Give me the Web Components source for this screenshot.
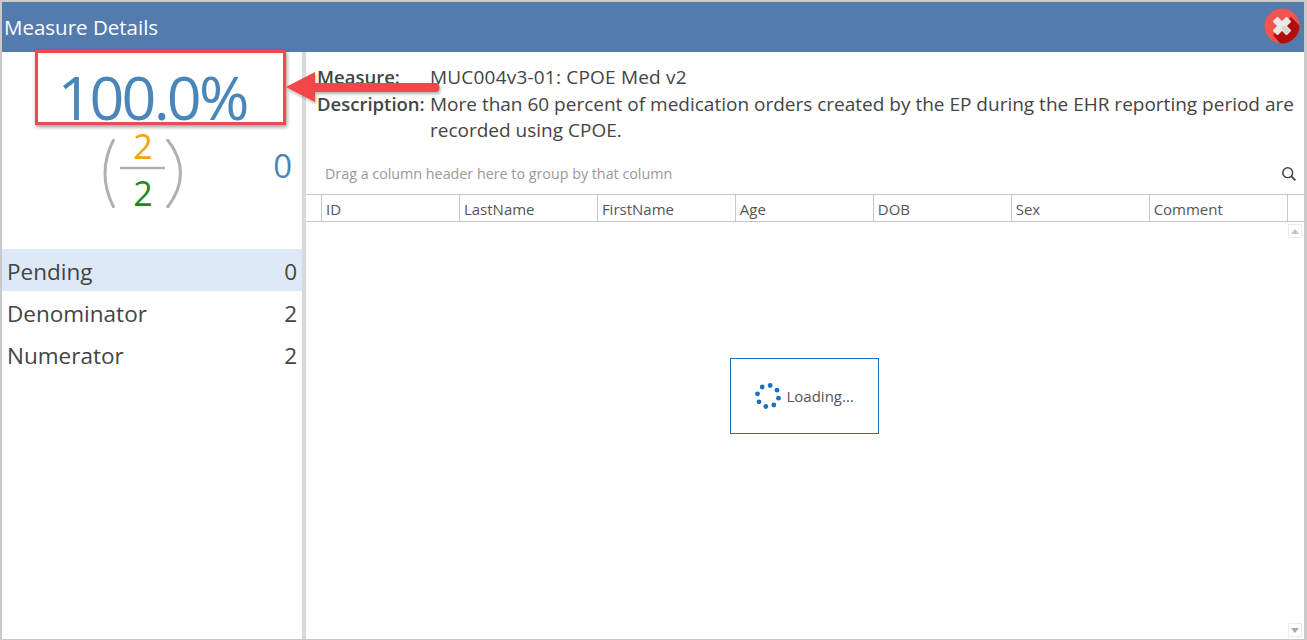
<!DOCTYPE html>
<html>
<head>
<meta charset="utf-8">
<title>Measure Details</title>
<style>
  html, body { margin: 0; height: 100%; overflow: hidden; background: #fff; }
  body { font-family: "Open Sans", "Noto Sans", sans-serif; color: #444; }
</style>
</head>
<body>
<measure-window>
  <title-bar slot="title">Measure Details</title-bar>
  <score-panel slot="left" percent="100.0%" numerator="2" denominator="2" pending="0">
    <count-row active label="Pending" value="0"></count-row>
    <count-row label="Denominator" value="2"></count-row>
    <count-row label="Numerator" value="2"></count-row>
  </score-panel>
  <measure-info slot="right" measure="MUC004v3-01: CPOE Med v2">More than 60 percent of medication orders created by the EP during the EHR reporting period are recorded using CPOE.</measure-info>
  <data-grid slot="right" columns='["ID","LastName","FirstName","Age","DOB","Sex","Comment"]'></data-grid>
</measure-window>
<callout-mark></callout-mark>

<script>
class MeasureWindow extends HTMLElement {
  constructor() {
    super();
    this.attachShadow({ mode: 'open' });
    this.shadowRoot.innerHTML = `
      <style>
        :host {
          display: flex;
          flex-direction: column;
          box-sizing: border-box;
          width: 1307px;
          height: 640px;
          border: solid #c9c9c9;
          border-width: 2px 3px 1px 2px;
        }
        .body { flex: 1; display: flex; min-height: 0; }
        .left { width: 300px; flex: none; }
        .splitter { width: 4px; flex: none; background: #d9d9d9; }
        .right { flex: 1; min-width: 0; display: flex; flex-direction: column; }
      </style>
      <slot name="title"></slot>
      <div class="body">
        <div class="left"><slot name="left"></slot></div>
        <div class="splitter"></div>
        <div class="right"><slot name="right"></slot></div>
      </div>
    `;
  }
}

class TitleBar extends HTMLElement {
  constructor() {
    super();
    this.attachShadow({ mode: 'open' });
    this.shadowRoot.innerHTML = `
      <style>
        :host {
          display: flex;
          align-items: center;
          justify-content: space-between;
          height: 50px;
          flex: none;
          padding: 0 4px 0 2px;
          box-sizing: border-box;
          background: #537bae;
          color: #fff;
          font-size: 20.5px;
          line-height: 54px;
        }
        svg { width: 36px; height: 36px; display: block; margin-top: -2px; }
      </style>
      <span><slot></slot></span>
      <svg viewBox="0 0 36 36">
        <defs><clipPath id="c"><circle cx="18" cy="18" r="17.5"/></clipPath></defs>
        <circle cx="18" cy="18" r="17.5" fill="#f4544f"/>
        <path clip-path="url(#c)" d="M27 9L40 22V40H20L9 27Z" fill="#b10f0b"/>
        <path d="M10 13.5L13.5 10L18 14.5L22.5 10L26 13.5L21.5 18L26 22.5L22.5 26L18 21.5L13.5 26L10 22.5L14.5 18Z" fill="#e9e9e9" stroke="#e9e9e9" stroke-width="2" stroke-linejoin="round"/>
        <path d="M18 18L21.5 18L26 22.5L22.5 26L18 21.5Z" fill="#d6d6d6"/>
      </svg>
    `;
  }
}

class ScorePanel extends HTMLElement {
  constructor() {
    super();
    this.attachShadow({ mode: 'open' });
    const percent = this.getAttribute('percent');
    const numerator = this.getAttribute('numerator');
    const denominator = this.getAttribute('denominator');
    const pending = this.getAttribute('pending');
    this.shadowRoot.innerHTML = `
      <style>
        :host { display: block; }
        .percent {
          height: 87px;
          box-sizing: border-box;
          padding-top: 9px;
          text-align: center;
          color: #4a86b8;
          font-size: 61px;
          line-height: 72px;
          letter-spacing: -2.8px;
        }
        .ratio { height: 110px; position: relative; }
        .fraction { margin-left: 97px; width: 90px; height: 69px; }
        .fraction svg { width: 90px; height: 69px; display: block; }
        .stack {
          position: absolute;
          left: 97px;
          top: 0;
          width: 88px;
          text-align: center;
          font-size: 34px;
          line-height: 26px;
        }
        .num { color: #f5a100; margin-top: -6px; }
        .den { color: #1a8a1f; margin-top: 21px; }
        .pending {
          position: absolute;
          right: 10px;
          top: 5px;
          color: #4a86b8;
          font-size: 33px;
          line-height: 44px;
        }
      </style>
      <div class="percent">${percent}</div>
      <div class="ratio">
        <div class="fraction">
          <svg viewBox="0 0 90 69" fill="none" stroke="#b0b0b0">
            <path d="M15 0Q-3 34 15 69" stroke-width="3"/>
            <path d="M68 0Q95 34 68 69" stroke-width="3"/>
            <path d="M21 29H66" stroke-width="2.5"/>
          </svg>
        </div>
        <div class="stack">
          <div class="num">${numerator}</div>
          <div class="den">${denominator}</div>
        </div>
        <div class="pending">${pending}</div>
      </div>
      <slot></slot>
    `;
  }
}

class CountRow extends HTMLElement {
  constructor() {
    super();
    this.attachShadow({ mode: 'open' });
    this.shadowRoot.innerHTML = `
      <style>
        :host {
          display: flex;
          justify-content: space-between;
          height: 42px;
          padding: 0 5px;
          color: #444;
          font-size: 22.5px;
          line-height: 46px;
        }
        :host([active]) { background: #dde9f6; }
      </style>
      <span>${this.getAttribute('label')}</span>
      <span>${this.getAttribute('value')}</span>
    `;
  }
}

class MeasureInfo extends HTMLElement {
  constructor() {
    super();
    this.attachShadow({ mode: 'open' });
    this.shadowRoot.innerHTML = `
      <style>
        :host {
          display: grid;
          grid-template-columns: 113px 1fr;
          align-content: start;
          flex: none;
          height: 103px;
          box-sizing: border-box;
          padding: 12px 5px 0 11px;
          color: #444;
          font-size: 19px;
          line-height: 26.5px;
        }
        b { font-weight: 600; font-size: 18.5px; }
        .code { letter-spacing: .2px; }
      </style>
      <b>Measure:</b><span class="code">${this.getAttribute('measure')}</span>
      <b>Description:</b><span><slot></slot></span>
    `;
  }
}

class DataGrid extends HTMLElement {
  constructor() {
    super();
    this.attachShadow({ mode: 'open' });
    const columns = JSON.parse(this.getAttribute('columns'));
    this.shadowRoot.innerHTML = `
      <style>
        :host {
          flex: 1;
          min-height: 0;
          display: flex;
          flex-direction: column;
          position: relative;
          font-size: 15px;
        }
        .group {
          height: 39px;
          flex: none;
          box-sizing: border-box;
          padding: 0 7px 2px 19px;
          display: flex;
          align-items: center;
          justify-content: space-between;
          color: #999;
          font-size: 14.3px;
        }
        .group svg { width: 16px; height: 16px; display: block; }
        .head {
          display: flex;
          flex: none;
          height: 28px;
          box-sizing: border-box;
          border-top: 1px solid #c8c8c8;
          border-bottom: 1px solid #c8c8c8;
          color: #555;
        }
        .head div {
          box-sizing: border-box;
          width: 137.95px;
          flex: none;
          border-right: 1px solid #c8c8c8;
          padding-left: 4px;
          line-height: 29px;
        }
        .head div:first-child { width: 16px; padding: 0; }
        .head div:last-child { border-right: 0; flex: 1; width: auto; }
        .body { flex: 1; min-height: 0; display: flex; align-items: center; justify-content: center; padding: 0 2px 70px 0; }
        .arrow {
          position: absolute;
          right: 2px;
          width: 14px;
          height: 14px;
          box-sizing: border-box;
          border: 1px solid #ececec;
          display: flex;
          align-items: center;
          justify-content: center;
        }
        .up { top: 69px; }
        .down { bottom: 2px; }
        .arrow i { width: 0; height: 0; border: 4px solid transparent; }
        .up i { border-bottom: 5px solid #c4c4c4; border-top: 0; }
        .down i { border-top: 5px solid #a8a8a8; border-bottom: 0; }
      </style>
      <div class="group">
        <span>Drag a column header here to group by that column</span>
        <svg viewBox="0 0 15 15" fill="none" stroke="#444" stroke-width="1.4">
          <circle cx="6.3" cy="6.3" r="4.6"/>
          <path d="M9.7 9.7L13.5 13.5" stroke-width="1.8"/>
        </svg>
      </div>
      <div class="head">
        <div></div>
        ${columns.map(col => `<div>${col}</div>`).join('')}
        <div></div>
      </div>
      <div class="body"><loading-panel>Loading...</loading-panel></div>
      <span class="arrow up"><i></i></span>
      <span class="arrow down"><i></i></span>
    `;
  }
}

class LoadingPanel extends HTMLElement {
  constructor() {
    super();
    this.attachShadow({ mode: 'open' });
    const dots = [];
    for (let i = 0; i < 8; i++) {
      const a = (i * 45 + 12) * Math.PI / 180;
      dots.push(`<circle cx="${(13 + 10.7 * Math.cos(a)).toFixed(1)}" cy="${(13 + 10.7 * Math.sin(a)).toFixed(1)}" r="2.4"/>`);
    }
    this.shadowRoot.innerHTML = `
      <style>
        :host {
          display: flex;
          align-items: center;
          gap: 6px;
          width: 149px;
          height: 76px;
          box-sizing: border-box;
          padding-left: 24px;
          border: 1px solid #1a73bd;
          background: #fff;
          color: #555;
          font-size: 15px;
        }
        svg { width: 26px; height: 26px; display: block; fill: #1a6fc0; }
      </style>
      <svg viewBox="0 0 26 26">${dots.join('')}</svg>
      <span><slot></slot></span>
    `;
  }
}

// red highlight drawn over the screenshot, sits on top of everything
class CalloutMark extends HTMLElement {
  constructor() {
    super();
    this.attachShadow({ mode: 'open' });
    this.shadowRoot.innerHTML = `
      <style>
        :host { position: absolute; left: 0; top: 0; width: 1307px; height: 640px; pointer-events: none; display: block; }
        .box {
          position: absolute;
          left: 35px;
          top: 50px;
          width: 251px;
          height: 75px;
          box-sizing: border-box;
          border: 3px solid #f04a50;
          box-shadow: 1px 2px 4px rgba(0, 0, 0, .4);
        }
        svg { position: absolute; left: 280px; top: 66px; width: 170px; height: 44px; }
      </style>
      <div class="box"></div>
      <svg viewBox="0 0 170 44">
        <defs><filter id="s" x="-10%" y="-30%" width="120%" height="170%"><feDropShadow dx="1" dy="2" stdDeviation="1.5" flood-color="#000" flood-opacity=".3"/></filter></defs>
        <path filter="url(#s)" d="M6 21L35 6V17H156Q159.5 17 159.5 21.5Q159.5 26 156 26H35V36Z" fill="#f44449"/>
      </svg>
    `;
  }
}

customElements.define('title-bar', TitleBar);
customElements.define('count-row', CountRow);
customElements.define('score-panel', ScorePanel);
customElements.define('measure-info', MeasureInfo);
customElements.define('loading-panel', LoadingPanel);
customElements.define('data-grid', DataGrid);
customElements.define('measure-window', MeasureWindow);
customElements.define('callout-mark', CalloutMark);
</script>
</body>
</html>
